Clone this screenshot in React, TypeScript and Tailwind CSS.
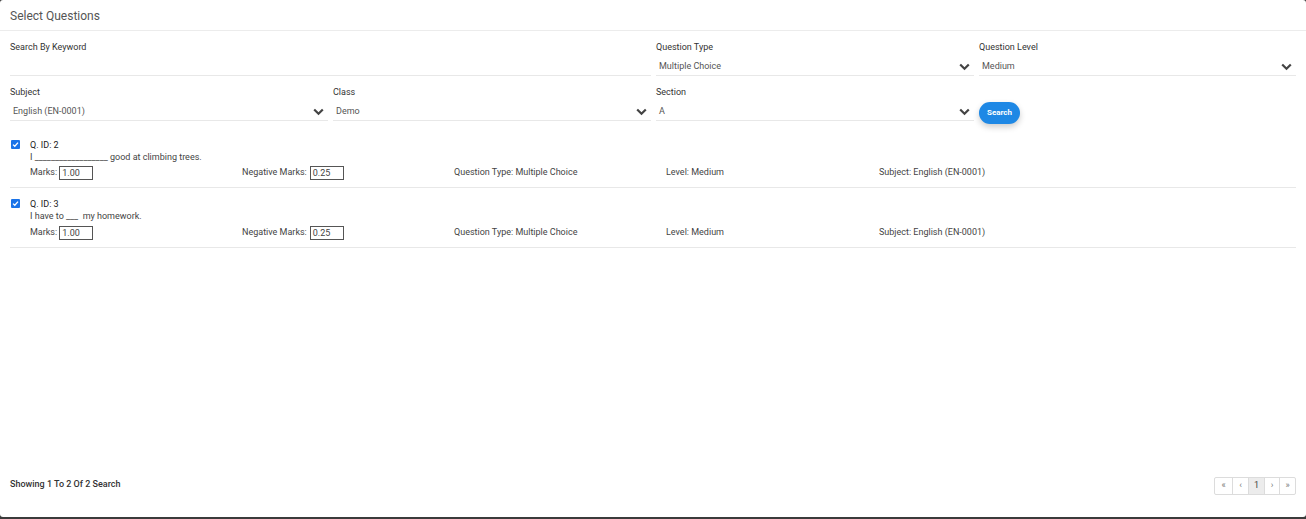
import React from "react";

const font = { fontFamily: "Roboto, 'Liberation Sans', sans-serif" };

function Chevron() {
  return (
    <svg width="11" height="8" viewBox="0 0 11 8" className="shrink-0">
      <path d="M1.2 1.5 L5.5 5.8 L9.8 1.5" fill="none" stroke="#444" strokeWidth="2.2" />
    </svg>
  );
}

function SelectField({ label, value }: { label: string; value: string }) {
  return (
    <div className="flex flex-col">
      <div className="text-[9px] text-[#333] h-[14px] leading-[14px]">{label}</div>
      <div className="flex items-center justify-between border-b border-[#e8e8e8] h-[22px] pt-[5px] pl-[3px] pr-[4px]">
        <span className="text-[9px] text-[#555]">{value}</span>
        <Chevron />
      </div>
    </div>
  );
}

function Question({ id, text, first }: { id: string; text: React.ReactNode; first?: boolean }) {
  return (
    <div className={`flex border-b border-[#e8e8e8] pb-[7px] ${first ? "pt-[9px]" : "pt-[10px]"}`}>
      <div className="w-[20px] pl-[1px] pt-[1px]">
        <div className="w-[9px] h-[9px] rounded-[1px] bg-[#1a73e8] flex items-center justify-center">
          <svg width="7" height="7" viewBox="0 0 7 7">
            <path d="M1 3.6 L2.8 5.3 L6 1.6" fill="none" stroke="white" strokeWidth="1.3" />
          </svg>
        </div>
      </div>
      <div className="flex-1">
        <div className="text-[9px] text-[#222] leading-[12px]">Q. ID: {id}</div>
        <div className="text-[9px] text-[#444] leading-[12px]">{text}</div>
        <div className={`grid grid-cols-[212px_212px_212px_213px_1fr] text-[9px] text-[#444] items-center ${first ? "mt-[3px]" : "mt-[4px]"}`}>
          <div className="flex items-center">
            Marks:
            <span className="ml-[2px] border border-[#555] w-[34px] h-[14px] leading-[12px] pl-[2px] text-[#444]">1.00</span>
          </div>
          <div className="flex items-center">
            Negative Marks:
            <span className="ml-[3px] border border-[#555] w-[34px] h-[14px] leading-[12px] pl-[2px] text-[#444]">0.25</span>
          </div>
          <div>Question Type: Multiple Choice</div>
          <div>Level: Medium</div>
          <div>Subject: English (EN-0001)</div>
        </div>
      </div>
    </div>
  );
}

export default function App() {
  return (
    <div className="h-[519px] w-[1306px] bg-[#3b3b3b]" style={font}>
      <div className="h-[517px] bg-white rounded-[3px] flex flex-col">
        <div className="h-[31px] border-b border-[#ececec] px-[10px] pt-[1px] flex items-center">
          <span className="text-[12px] text-[#555]">Select Questions</span>
        </div>
        <div className="pl-[10px] pr-[10px] pt-[9px]">
          <div className="grid grid-cols-[318px_318px_318px_1fr] gap-x-[5px] gap-y-[9px]">
            <div className="col-span-2 flex flex-col">
              <div className="text-[9px] text-[#333] h-[14px] leading-[14px]">Search By Keyword</div>
              <div className="border-b border-[#e8e8e8] h-[22px]"></div>
            </div>
            <SelectField label="Question Type" value="Multiple Choice" />
            <SelectField label="Question Level" value="Medium" />
            <SelectField label="Subject" value="English (EN-0001)" />
            <SelectField label="Class" value="Demo" />
            <SelectField label="Section" value="A" />
            <div className="flex items-start pt-[17px]">
              <button className="h-[22px] w-[41px] rounded-full bg-[#1e88e5] text-white text-[8px] font-bold shadow-[0_3px_6px_rgba(0,0,0,0.2)]">
                Search
              </button>
            </div>
          </div>
          <div className="mt-[6px]">
            <Question
              first
              id="2"
              text={<>I <span>__________________</span> good at climbing trees.</>}
            />
            <Question id="3" text={<>I have to ___&nbsp; my homework.</>} />
          </div>
        </div>
        <div className="flex-1" />
        <div className="px-[10px] pb-[22px] flex items-center justify-between">
          <span className="text-[9px] font-medium text-[#333]">Showing 1 To 2 Of 2 Search</span>
          <div className="flex border border-[#dcdcdc] rounded-[2px] text-[9px] text-[#777] h-[18px] mt-[2px]">
            <span className="w-[17px] flex items-center justify-center">«</span>
            <span className="w-[16px] flex items-center justify-center border-l border-[#dcdcdc]">‹</span>
            <span className="w-[16px] flex items-center justify-center border-l border-[#dcdcdc] bg-[#ececec] text-[#444]">1</span>
            <span className="w-[15px] flex items-center justify-center border-l border-[#dcdcdc]">›</span>
            <span className="w-[16px] flex items-center justify-center border-l border-[#dcdcdc]">»</span>
          </div>
        </div>
      </div>
    </div>
  );
}
